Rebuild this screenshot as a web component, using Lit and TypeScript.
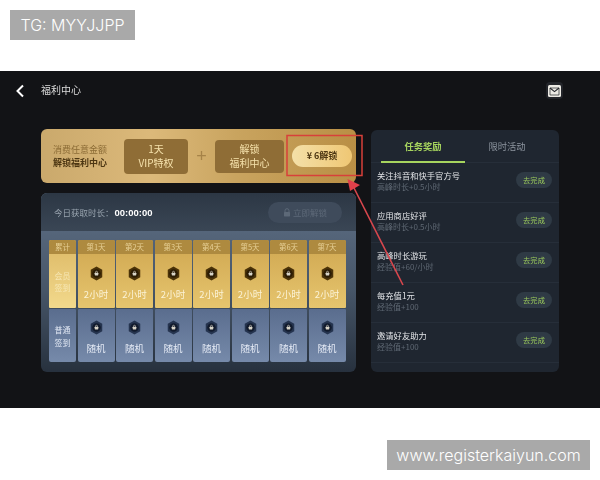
import { LitElement, html, css, svg } from "lit";
import { customElement } from "lit/decorators.js";

const hex = (outer: string, inner: string) => html`<svg class="hex" viewBox="0 0 14 16" width="13" height="15">
  ${svg`<path d="M7 .5 13.2 4v8L7 15.5.8 12V4z" fill="${outer}"/>
  <circle cx="7" cy="8" r="4.6" fill="${inner}"/>
  <path d="M5.9 7.4V6.700a1.1 1.1 0 0 1 2.200 0v.7" fill="none" stroke="#d8d4c8" stroke-width=".7"/>
  <rect x="5.100" y="7.300" width="3.800" height="2.800" rx=".5" fill="#d8d4c8"/>`}
</svg>`;

const tasks = [
  ["关注抖音和快手官方号", "高峰时长+0.5小时"],
  ["应用商店好评", "高峰时长+0.5小时"],
  ["高峰时长游玩", "经验值+60/小时"],
  ["每充值1元", "经验值+100"],
  ["邀请好友助力", "经验值+100"],
];

@customElement("app-root")
export class AppRoot extends LitElement {
  static styles = css`
    :host {
      display: block;
      position: relative;
      width: 600px;
      height: 480px;
      background: #fff;
      overflow: hidden;
      font-family: "Noto Sans CJK SC", "Noto Sans", sans-serif;
    }
    .mark {
      position: absolute;
      background: #a9a9a9;
      color: #fff;
      height: 30px;
      line-height: 30px;
      font-family: Inter, "Liberation Sans", sans-serif;
      font-weight: 300;
      font-size: 16px;
      text-align: center;
    }
    .m1 { left: 10px; top: 10px; width: 125px; }
    .m2 { left: 387px; top: 440px; width: 203px; }
    .screen {
      position: absolute;
      inset: 71px 0 72px 0;
      background: #121316;
      box-sizing: border-box;
      display: flex;
      flex-direction: column;
      filter: blur(0.3px);
    }
    .top {
      height: 58px;
      flex: none;
      display: flex;
      align-items: flex-start;
      padding: 11px 37px 0 14px;
      box-sizing: border-box;
    }
    .back { margin-top: 2px; width: 12px; height: 14px; flex: none; }
    .title {
      margin-left: 15px;
      font-size: 10px;
      line-height: 16px;
      color: #dcdcdc;
      flex: 1;
    }
    .mail {
      width: 17px;
      height: 17px;
      background: #23252a;
      border-radius: 4px;
      display: flex;
      align-items: center;
      justify-content: center;
    }
    .body {
      display: flex;
      gap: 15px;
      padding-left: 41px;
      align-items: flex-start;
    }
    .left {
      width: 315px;
      flex: none;
      display: flex;
      flex-direction: column;
      gap: 10px;
    }
    .banner {
      height: 54px;
      border-radius: 6px;
      background: linear-gradient(90deg, #caa96c 0%, #dcb97a 35%, #c9a45f 62%, #b98f45 100%);
      display: flex;
      align-items: center;
      padding-left: 12px;
      box-sizing: border-box;
    }
    .b-text { font-size: 9px; line-height: 13px; width: 71px; flex: none; color: #8c6c36; }
    .b-text b { display: block; color: #4d3713; font-weight: 700; }
    .b-box {
      background: #8f6d36;
      color: #f6e2ac;
      border-radius: 4px;
      font-size: 10px;
      line-height: 14.5px;
      text-align: center;
      display: flex;
      flex-direction: column;
      justify-content: center;
      flex: none;
    }
    .box1 { width: 64px; height: 35px; }
    .box2 { width: 69px; height: 33px; }
    .plus { width: 27px; flex: none; text-align: center; color: #a68348; font-size: 18px; line-height: 18px; font-family: "Liberation Sans", sans-serif; }
    .buy {
      margin-left: 8px;
      width: 60px;
      height: 22px;
      border-radius: 11px;
      background: linear-gradient(90deg, #f4e0a8, #efc774);
      color: #4d3713;
      font-size: 9px;
      font-weight: 700;
      line-height: 22px;
      text-align: center;
      flex: none;
    }
    .card {
      height: 179px;
      border-radius: 6px;
      overflow: hidden;
      display: flex;
      flex-direction: column;
      background: linear-gradient(180deg, #5f7087 0%, #465567 55%, #27313e 100%);
    }
    .card-head {
      height: 38px;
      flex: none;
      background: linear-gradient(180deg, #2c3744, #3a4655);
      display: flex;
      align-items: center;
      padding: 0 14px 0 13px;
      box-sizing: border-box;
      font-size: 8.5px;
      color: #98a3ae;
    }
    .card-head b { color: #fff; font-size: 9.5px; font-family: "Liberation Sans", sans-serif; margin-left: 1px; flex: 1; }
    .now {
      width: 74px;
      height: 21px;
      border-radius: 11px;
      background: #3f4b5b;
      color: #5d6978;
      font-size: 8.5px;
      display: flex;
      align-items: center;
      justify-content: center;
      gap: 2px;
    }
    .grid {
      display: flex;
      gap: 1.5px;
      padding: 9px 0 0 8px;
    }
    .col { width: 37px; flex: none; display: flex; flex-direction: column; gap: 1px; text-align: center; }
    .col.first { width: 27px; }
    .gold {
      height: 68px;
      border-radius: 2px 2px 1px 1px;
      overflow: hidden;
      background: linear-gradient(180deg, #cfa650 0%, #e6c56e 100%);
      display: flex;
      flex-direction: column;
    }
    .col.first .gold { background: linear-gradient(180deg, #dcb865, #f2d98c); }
    .d {
      height: 14px;
      flex: none;
      background: #ae8a3f;
      color: #e6cf94;
      font-size: 7.5px;
      line-height: 14px;
    }
    .blue {
      height: 53px;
      border-radius: 1px 1px 2px 2px;
      background: linear-gradient(180deg, #5a6d8e 0%, #768aaa 100%);
      display: flex;
      flex-direction: column;
      align-items: center;
    }
    .g-in { flex: 1; display: flex; flex-direction: column; align-items: center; padding-top: 12px; }
    .hex { display: block; flex: none; }
    .val { font-size: 9.5px; line-height: 12px; color: #fbf3d6; margin-top: 7px; }
    .blue .hex { margin-top: 11px; }
    .blue .val { color: #e3e9f4; margin-top: 7px; }
    .lab { font-size: 8px; line-height: 12px; color: #f6e6b2; padding-top: 16px; }
    .blue .lab { color: #dfe6f2; padding-top: 14px; line-height: 13px; }
    .right {
      width: 188px;
      height: 242px;
      margin-top: 1px;
      flex: none;
      border-radius: 6px;
      background: #1f2630;
      overflow: hidden;
    }
    .tabs {
      display: flex;
      height: 33px;
      padding: 0 10px;
      border-bottom: 1px solid #262e39;
      box-sizing: border-box;
      font-size: 9.3px;
      line-height: 32px;
      text-align: center;
      color: #8c949e;
    }
    .tab { width: 84px; flex: none; }
    .tab.on { color: #a6d45e; font-weight: 700; box-shadow: inset 0 -2px 0 #a6d45e; height: 33px; }
    .row {
      height: 40px;
      box-sizing: border-box;
      border-bottom: 1px solid #262e39;
      display: flex;
      align-items: center;
      padding: 0 7px 0 6px;
    }
    .info { flex: 1; padding-bottom: 5px; }
    .t { font-size: 8.3px; line-height: 12px; color: #e2e4e7; }
    .s { font-size: 8px; line-height: 11px; color: #5f6873; }
    .go {
      width: 36px;
      height: 16px;
      border-radius: 8px;
      background: #2f3a45;
      color: #9ccb5c;
      font-size: 7.3px;
      line-height: 16px;
      text-align: center;
      margin-bottom: 5px;
    }
    .overlay { position: absolute; left: 0; top: 0; pointer-events: none; }
  `;

  render() {
    const days = [1, 2, 3, 4, 5, 6, 7];
    return html`
      <div class="screen">
        <div class="top">
          <svg class="back" viewBox="0 0 12 14"><path d="M9 1.5 3.5 7 9 12.5" fill="none" stroke="#fff" stroke-width="2"/></svg>
          <div class="title">福利中心</div>
          <div class="mail">
            <svg width="13" height="12" viewBox="0 0 13 12">
              <rect width="13" height="12" rx="1.5" fill="#eceae4"/>
              <path d="M2 3l4.5 3.6L11 3" fill="none" stroke="#23252a" stroke-width="1.1"/>
              <path d="M2.200 3H11M2 3v7h9V3" fill="none" stroke="#23252a" stroke-width=".7"/>
            </svg>
          </div>
        </div>
        <div class="body">
          <div class="left">
            <div class="banner">
              <div class="b-text">消费任意金额<b>解锁福利中心</b></div>
              <div class="b-box box1"><span>1天</span><span>VIP特权</span></div>
              <div class="plus">+</div>
              <div class="b-box box2"><span>解锁</span><span>福利中心</span></div>
              <div class="buy">¥ 6解锁</div>
            </div>
            <div class="card">
              <div class="card-head">
                今日获取时长：<b>00:00:00</b>
                <div class="now">
                  <svg width="8" height="9" viewBox="0 0 8 9"><path d="M2 4V2.700a2 2 0 0 1 4 0V4" fill="none" stroke="#5d6978"/><rect x="1" y="4" width="6" height="4.400" rx=".6" fill="#5d6978"/></svg>
                  立即解锁
                </div>
              </div>
              <div class="grid">
                <div class="col first">
                  <div class="gold"><div class="d">累计</div><div class="lab">会员<br />签到</div></div>
                  <div class="blue"><div class="lab">普通<br />签到</div></div>
                </div>
                ${days.map(
                  (n) => html`<div class="col">
                    <div class="gold">
                      <div class="d">第${n}天</div>
                      <div class="g-in">${hex("#4a3208", "#2b1c05")}<div class="val">2小时</div></div>
                    </div>
                    <div class="blue">${hex("#25344f", "#121b2d")}<div class="val">随机</div></div>
                  </div>`
                )}
              </div>
            </div>
          </div>
          <div class="right">
            <div class="tabs">
              <div class="tab on">任务奖励</div>
              <div class="tab">限时活动</div>
            </div>
            ${tasks.map(
              ([t, s]) => html`<div class="row">
                <div class="info"><div class="t">${t}</div><div class="s">${s}</div></div>
                <div class="go">去完成</div>
              </div>`
            )}
          </div>
        </div>
      </div>
      <div class="mark m1">TG: MYYJJPP</div>
      <div class="mark m2">www.registerkaiyun.com</div>
      <svg class="overlay" width="600" height="480" viewBox="0 0 600 480">
        <rect x="287" y="135.500" width="75" height="40" fill="none" stroke="#d8403a" stroke-width="1.500"/>
        <path d="M403 285 353 186" stroke="#d8474d" stroke-width="1.600" fill="none"/>
        <path d="M347.500 179 360 185 350 191z" fill="#e0404a"/>
      </svg>
    `;
  }
}
